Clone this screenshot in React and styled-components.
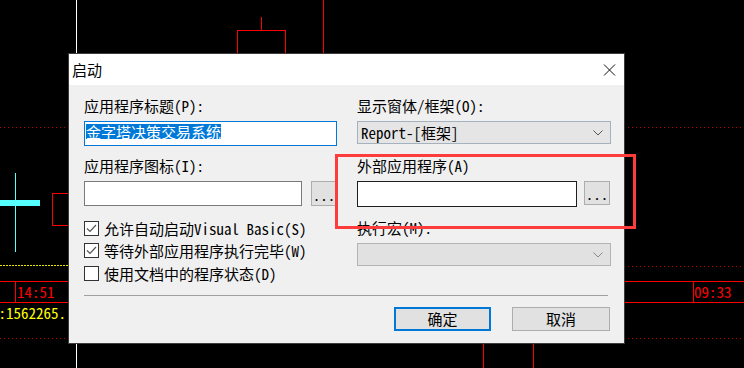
import styled, { createGlobalStyle } from 'styled-components';

const UI_FONT = `"Noto Sans Mono CJK SC", "Noto Sans CJK SC", "Liberation Mono", monospace`;
const TITLE_FONT = `"Noto Sans CJK SC", "Noto Sans", sans-serif`;

const GlobalStyle = createGlobalStyle`
  html, body {
    margin: 0;
    padding: 0;
    background: #000;
  }
  body {
    width: 744px;
    height: 368px;
    overflow: hidden;
  }
`;

const Screen = styled.div`
  position: relative;
  width: 744px;
  height: 368px;
  background: #000;
  overflow: hidden;
  font-family: ${UI_FONT};
`;

const ChartSvg = styled.svg`
  position: absolute;
  inset: 0;
  shape-rendering: crispEdges;
`;

const Chart = () => (
  <ChartSvg width="744" height="368" viewBox="0 0 744 368">
    <line x1="76.5" y1="0" x2="76.5" y2="368" stroke="#fff" />
    <line x1="323.5" y1="0" x2="323.5" y2="60" stroke="#f00" />
    <line x1="261.5" y1="17" x2="261.5" y2="30" stroke="#f00" />
    <rect x="237.5" y="30.5" width="48" height="40" fill="none" stroke="#f00" />
    <line x1="0" y1="127.5" x2="744" y2="127.5" stroke="#c00000" strokeDasharray="1 3" />
    <line x1="15.5" y1="173" x2="15.5" y2="252" stroke="#55ffff" />
    <rect x="0" y="200" width="40" height="6" fill="#55ffff" />
    <rect x="52.5" y="193.5" width="100" height="32" fill="none" stroke="#f00" />
    <line x1="0" y1="265.5" x2="372" y2="265.5" stroke="#e8e800" strokeDasharray="2 1" />
    <line x1="372" y1="266.5" x2="744" y2="266.5" stroke="#c00000" strokeDasharray="1 3" />
    <line x1="0" y1="281.5" x2="744" y2="281.5" stroke="#f00" />
    <line x1="0" y1="302.5" x2="744" y2="302.5" stroke="#f00" />
    <line x1="15.5" y1="281" x2="15.5" y2="302" stroke="#f00" />
    <line x1="693.5" y1="281" x2="693.5" y2="302" stroke="#f00" />
    <text x="17" y="298" fill="#f00" fontSize="15" fontFamily={UI_FONT}>14:51</text>
    <text x="694" y="298" fill="#f00" fontSize="15" fontFamily={UI_FONT}>09:33</text>
    <text x="-1.5" y="319" fill="#ffff00" fontSize="15" fontFamily={UI_FONT}>:1562265.</text>
    <line x1="0" y1="338.5" x2="744" y2="338.5" stroke="#c00000" strokeDasharray="1 3" />
    <line x1="483.5" y1="330" x2="483.5" y2="368" stroke="#f00" />
    <line x1="533.5" y1="330" x2="533.5" y2="368" stroke="#f00" />
  </ChartSvg>
);

const Dialog = styled.div`
  position: absolute;
  left: 68px;
  top: 53px;
  width: 557px;
  height: 291px;
  box-sizing: border-box;
  border: 1px solid #3c3c3c;
  background: #f0f0f0;
  display: flex;
  flex-direction: column;
  color: #000;
  font-size: 15px;
`;

const TitleBar = styled.div`
  height: 31px;
  background: #fff;
  display: flex;
  align-items: center;
  justify-content: space-between;
  padding: 0 8px 0 3px;
  font-family: ${TITLE_FONT};
  font-size: 15px;
`;

const CloseIcon = () => (
  <svg width="13" height="12" viewBox="0 0 13 12">
    <path d="M1 0.5 L12 11.5 M12 0.5 L1 11.5" stroke="#111" strokeWidth="1" fill="none" />
  </svg>
);

const Body = styled.div`
  flex: 1;
  display: flex;
  flex-direction: column;
  padding: 11px 13px 0 15px;
`;

const Columns = styled.div`
  display: grid;
  grid-template-columns: 253px 254px;
  column-gap: 20px;
  align-items: start;
`;

const Column = styled.div`
  display: flex;
  flex-direction: column;
`;

const Label = styled.div`
  height: 20px;
  line-height: 20px;
  margin-top: ${(p) => p.$gap || 0}px;
  white-space: nowrap;
`;

const FieldRow = styled.div`
  display: flex;
  gap: ${(p) => p.$gap}px;
  margin-top: 5px;
  align-items: flex-start;
`;

const TextBox = styled.div`
  box-sizing: border-box;
  width: ${(p) => p.$w}px;
  height: ${(p) => p.$h || 25}px;
  background: #fff;
  border: 1px solid ${(p) => p.$border};
  padding: 2px 0 0 1px;
  display: flex;
  align-items: flex-start;
`;

const Selected = styled.span`
  background: #0078d7;
  color: #fff;
  line-height: 15px;
  height: 15px;
  white-space: nowrap;
`;

const DotsButton = styled.div`
  box-sizing: border-box;
  width: 26px;
  height: ${(p) => p.$h}px;
  background: #e1e1e1;
  border: 1px solid #adadad;
  display: flex;
  align-items: center;
  justify-content: center;
  padding-top: 1px;
`;

const Select = styled.div`
  box-sizing: border-box;
  width: 254px;
  height: ${(p) => p.$h}px;
  margin-top: 5px;
  background: ${(p) => (p.$disabled ? '#e1e1e1' : '#e5e5e5')};
  border: 1px solid ${(p) => (p.$disabled ? '#b4b4b4' : '#a3b2be')};
  display: flex;
  align-items: center;
  justify-content: space-between;
  padding: 0 7px 0 3px;
`;

const Chevron = ({ color }) => (
  <svg width="10" height="6" viewBox="0 0 10 6">
    <path d="M0.5 0.5 L5 5 L9.5 0.5" stroke={color} strokeWidth="1" fill="none" />
  </svg>
);

const Checks = styled.div`
  display: flex;
  flex-direction: column;
  margin-top: 11px;
`;

const CheckRow = styled.div`
  height: 22.5px;
  display: flex;
  align-items: center;
  gap: 5px;
  white-space: nowrap;
`;

const Box = styled.div`
  box-sizing: border-box;
  width: 15px;
  height: 15px;
  border: 1px solid #333;
  background: #fff;
  display: flex;
  align-items: center;
  justify-content: center;
`;

const Tick = () => (
  <svg width="11" height="9" viewBox="0 0 11 9">
    <path d="M1 4.5 L4 7.5 L10 1" stroke="#555" strokeWidth="1.2" fill="none" />
  </svg>
);

const Check = ({ checked, children }) => (
  <CheckRow>
    <Box>{checked && <Tick />}</Box>
    <span>{children}</span>
  </CheckRow>
);

const Separator = styled.div`
  height: 1px;
  width: 524px;
  background: #a0a0a0;
  margin-top: 10px;
`;

const Buttons = styled.div`
  display: flex;
  justify-content: flex-end;
  gap: 21px;
  margin-top: 11px;
  padding-right: 1px;
`;

const Button = styled.div`
  box-sizing: border-box;
  width: ${(p) => p.$w}px;
  height: 24px;
  background: #e1e1e1;
  border: ${(p) => (p.$default ? '2px solid #0078d7' : '1px solid #adadad')};
  display: flex;
  align-items: center;
  justify-content: center;
  font-family: ${TITLE_FONT};
  font-size: 15px;
`;

const Highlight = styled.div`
  position: absolute;
  left: 335px;
  top: 154px;
  width: 301px;
  height: 75px;
  box-sizing: border-box;
  border: 3px solid #ff3c3c;
  pointer-events: none;
`;

export default function App() {
  return (
    <Screen>
      <GlobalStyle />
      <Chart />
      <Dialog>
        <TitleBar>
          <span>启动</span>
          <CloseIcon />
        </TitleBar>
        <Body>
          <Columns>
            <Column>
              <Label>应用程序标题(P):</Label>
              <FieldRow $gap={0}>
                <TextBox $w={253} $border="#0078d7">
                  <Selected>金字塔决策交易系统</Selected>
                </TextBox>
              </FieldRow>
              <Label $gap={10}>应用程序图标(I):</Label>
              <FieldRow $gap={9}>
                <TextBox $w={218} $border="#7a7a7a" />
                <DotsButton $h={25}>...</DotsButton>
              </FieldRow>
              <Checks>
                <Check checked>允许自动启动Visual Basic(S)</Check>
                <Check checked>等待外部应用程序执行完毕(W)</Check>
                <Check>使用文档中的程序状态(D)</Check>
              </Checks>
            </Column>
            <Column>
              <Label>显示窗体/框架(O):</Label>
              <Select $h={23}>
                <span>Report-[框架]</span>
                <Chevron color="#555" />
              </Select>
              <Label $gap={12}>外部应用程序(A)</Label>
              <FieldRow $gap={7}>
                <TextBox $w={220} $h={26} $border="#1e1e1e" />
                <DotsButton $h={24}>...</DotsButton>
              </FieldRow>
              <Label $gap={11}>执行宏(M):</Label>
              <Select $h={23} $disabled>
                <span />
                <Chevron color="#888" />
              </Select>
            </Column>
          </Columns>
          <Separator />
          <Buttons>
            <Button $w={97} $default>确定</Button>
            <Button $w={98}>取消</Button>
          </Buttons>
        </Body>
      </Dialog>
      <Highlight />
    </Screen>
  );
}
